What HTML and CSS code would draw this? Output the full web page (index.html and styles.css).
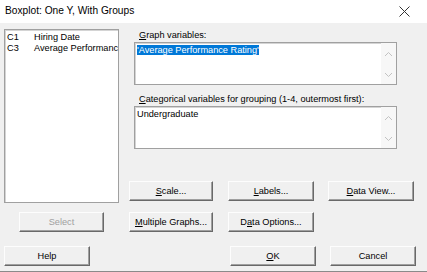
FILE: index.html
```html
<!DOCTYPE html>
<html lang="en">
<head>
    <meta charset="UTF-8" />
    <title>Boxplot: One Y, With Groups</title>
    <link rel="stylesheet" href="styles.css">
</head>
<body>
    <div class="dialog">
        <div class="titlebar">
            <span class="title">Boxplot: One Y, With Groups</span>
            <svg class="close" width="11" height="11" viewBox="0 0 11 11">
                <path d="M0.5 0.5 L10.5 10.5 M10.5 0.5 L0.5 10.5" stroke="#333" stroke-width="1" fill="none" />
            </svg>
        </div>
        <div class="content">
            <div class="top">
                <div class="list">
                    <div class="list-row"><span class="col">C1</span><span>Hiring Date</span></div>
                    <div class="list-row"><span class="col">C3</span><span>Average Performance Rating</span></div>
                </div>
                <div class="side">
                    <div class="fields">
                        <div class="label"><u>G</u>raph variables:</div>
                        <div class="box">
                            <div class="box-text"><span class="selected">'Average Performance Rating'</span></div>
                            <div class="scroll">
                                <svg width="9" height="6" viewBox="0 0 9 6"><path d="M1 5 L4.5 1.5 L8 5" stroke="#c2c2c2" fill="none" /></svg>
                                <svg width="9" height="6" viewBox="0 0 9 6"><path d="M1 1 L4.5 4.5 L8 1" stroke="#c2c2c2" fill="none" /></svg>
                            </div>
                        </div>
                        <div class="label second"><u>C</u>ategorical variables for grouping (1-4, outermost first):</div>
                        <div class="box">
                            <div class="box-text">Undergraduate</div>
                            <div class="scroll">
                                <svg width="9" height="6" viewBox="0 0 9 6"><path d="M1 5 L4.5 1.5 L8 5" stroke="#c2c2c2" fill="none" /></svg>
                                <svg width="9" height="6" viewBox="0 0 9 6"><path d="M1 1 L4.5 4.5 L8 1" stroke="#c2c2c2" fill="none" /></svg>
                            </div>
                        </div>
                    </div>
                    <div class="btn-row">
                        <button class="btn"><u>S</u>cale...</button>
                        <button class="btn"><u>L</u>abels...</button>
                        <button class="btn"><u>D</u>ata View...</button>
                    </div>
                </div>
            </div>
            <div class="row2">
                <button class="btn select" disabled>Select</button>
                <button class="btn multi"><u>M</u>ultiple Graphs...</button>
                <button class="btn">D<u>a</u>ta Options...</button>
            </div>
            <div class="row3">
                <button class="btn">Help</button>
                <button class="btn ok"><u>O</u>K</button>
                <button class="btn">Cancel</button>
            </div>
        </div>
    </div>
</body>
</html>
```

FILE: styles.css
```css
body {
    margin: 0;
    background: #f0f0f0;
    font-family: "Liberation Sans", Arial, sans-serif;
    font-size: 9.2px;
    color: #000;
}

.dialog {
    width: 427px;
    height: 272px;
    box-sizing: border-box;
    border-bottom: 1px solid #8a8a8a;
    overflow: hidden;
}

.titlebar {
    height: 23px;
    background: #fff;
    display: flex;
    align-items: center;
    justify-content: space-between;
    padding: 0 17px 0 5px;
}

.title {
    font-size: 10.2px;
    position: relative;
    top: -1px;
}

.content {
    padding: 6px 0 0 4px;
}

.top {
    display: flex;
}

.list {
    width: 115px;
    height: 174px;
    box-sizing: border-box;
    background: #fff;
    border: 1px solid #a0a0a0;
    box-shadow: inset 1px 1px 0 #d4d4d4;
    padding: 2px 0 0 2px;
    overflow: hidden;
    white-space: nowrap;
}

.list-row {
    display: flex;
    line-height: 11px;
}

.list-row span {
    flex-shrink: 0;
}

.list-row .col {
    width: 27px;
}

.side {
    margin-left: 10px;
    width: 286px;
}

.fields {
    padding-left: 5px;
    height: 152px;
}

.label {
    height: 13px;
    line-height: 13px;
    padding-left: 5px;
}

.label.second {
    margin-top: 8px;
}

.box {
    width: 263px;
    height: 43px;
    box-sizing: border-box;
    background: #fff;
    border: 1px solid #a0a0a0;
    box-shadow: inset 1px 1px 0 #d4d4d4;
    display: flex;
    justify-content: space-between;
}

.box-text {
    padding: 2px 0 0 2px;
    line-height: 11px;
    white-space: nowrap;
}

.selected {
    background: #0078d7;
    color: #fff;
}

.scroll {
    width: 15px;
    background: #f7f7f7;
    display: flex;
    flex-direction: column;
    justify-content: space-between;
    align-items: center;
    padding: 8px 0 6px;
}

.btn-row,
.row2,
.row3 {
    display: flex;
    gap: 15px;
}

.btn {
    width: 86px;
    height: 20px;
    padding: 0;
    margin: 0;
    font-family: inherit;
    font-size: 9.2px;
    color: #000;
    white-space: nowrap;
    background: #f0f0f0;
    border: 1px solid;
    border-color: #fdfdfd #696969 #696969 #fdfdfd;
    box-shadow: inset -1px -1px 0 #a0a0a0;
}

.btn u {
    text-decoration-thickness: 1px;
}

.btn-row .btn:first-child {
    width: 84px;
}

.btn-row .btn:nth-child(3) {
    margin-left: -1px;
}

.row2 {
    margin-top: 9px;
}

.row2 .select {
    margin-left: 15px;
    width: 85px;
    color: #a0a0a0;
}

.row2 .multi {
    margin-left: 10px;
    width: 84px;
}

.row3 {
    margin-top: 14px;
}

.row3 .ok {
    margin-left: 125px;
}

.row3 .btn:last-child {
    margin-left: -1px;
}
```
